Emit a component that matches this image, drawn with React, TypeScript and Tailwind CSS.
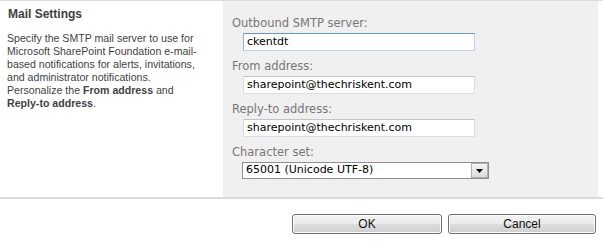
import React from "react";

const labelCls =
  "h-[16px] leading-[16px] text-[11.5px] text-[#777777] pl-[9px] whitespace-nowrap";

function Field({
  label,
  value,
  focused,
  mt,
}: {
  label: string;
  value: string;
  focused?: boolean;
  mt: string;
}) {
  return (
    <div className={"flex flex-col " + mt}>
      <div className={labelCls}>{label}</div>
      <div className="pl-[20px] mt-[2px]">
        <div
          className={
            "w-[232px] h-[18px] bg-white border flex items-center pl-[3px] text-[11px] text-black whitespace-nowrap " +
            (focused
              ? "border-[#b7d5f0] border-t-[#5b9bd5] border-l-[#86b7e3]"
              : "border-[#dedede] border-t-[#c4c4c4]")
          }
        >
          {value}
        </div>
      </div>
    </div>
  );
}

function Btn({ children, w }: { children: React.ReactNode; w: string }) {
  return (
    <div
      className={
        "h-[20px] rounded-[3px] border border-[#707070] flex items-center justify-center text-[12px] text-[#111] bg-[linear-gradient(to_bottom,#f2f2f2_0%,#ebebeb_50%,#dddddd_51%,#cfcfcf_100%)] shadow-[inset_0_0_0_1px_#fcfcfc] " +
        w
      }
      style={{ fontFamily: '"Liberation Sans", Arial, sans-serif' }}
    >
      {children}
    </div>
  );
}

export default function App() {
  return (
    <div className="w-[603px] h-[241px] bg-white overflow-hidden flex flex-col">
      <div className="h-[1px] bg-[#dcdcdc]" />
      <div className="flex h-[196px]">
        <div
          className="w-[223px] pl-[8px] pt-[6px] text-[#3f3f3f]"
          style={{ fontFamily: '"Liberation Sans", Arial, sans-serif' }}
        >
          <div className="text-[12px] font-bold leading-[14px]">Mail Settings</div>
          <div className="mt-[11px] text-[10.6px] leading-[13px] whitespace-nowrap -ml-[1px]">
            Specify the SMTP mail server to use for
            <br />
            Microsoft SharePoint Foundation e-mail-
            <br />
            based notifications for alerts, invitations,
            <br />
            and administrator notifications.
            <br />
            Personalize the <b>From address</b> and
            <br />
            <b>Reply-to address</b>.
          </div>
        </div>
        <div
          className="w-[375px] bg-[#f0f0f0] pt-[14px]"
          style={{ fontFamily: '"DejaVu Sans", Verdana, sans-serif' }}
        >
          <Field label="Outbound SMTP server:" value="ckentdt" focused mt="" />
          <Field label="From address:" value="sharepoint@thechriskent.com" mt="mt-[7px]" />
          <Field label="Reply-to address:" value="sharepoint@thechriskent.com" mt="mt-[7px]" />
          <div className="flex flex-col mt-[7px]">
            <div className={labelCls}>Character set:</div>
            <div className="pl-[19px] mt-[2px]">
              <div className="w-[247px] h-[17px] bg-white border border-[#8f8f8f] flex items-center text-[11px] text-black">
                <div className="flex-1 pl-[3px] whitespace-nowrap">65001 (Unicode UTF-8)</div>
                <div className="w-[17px] h-[15px] border border-[#b0b0b0] bg-[linear-gradient(to_bottom,#f4f4f4,#dcdcdc)] flex items-center justify-center">
                  <svg width="7" height="4" viewBox="0 0 7 4">
                    <path d="M0 0H7L3.5 4Z" fill="#000" />
                  </svg>
                </div>
              </div>
            </div>
          </div>
        </div>
        <div className="flex-1 bg-white" />
      </div>
      <div className="h-[2px] bg-[#dadada]" />
      <div className="flex justify-end gap-[6px] pr-[7px] pt-[15px]">
        <Btn w="w-[150px]">OK</Btn>
        <Btn w="w-[148px]">Cancel</Btn>
      </div>
    </div>
  );
}
